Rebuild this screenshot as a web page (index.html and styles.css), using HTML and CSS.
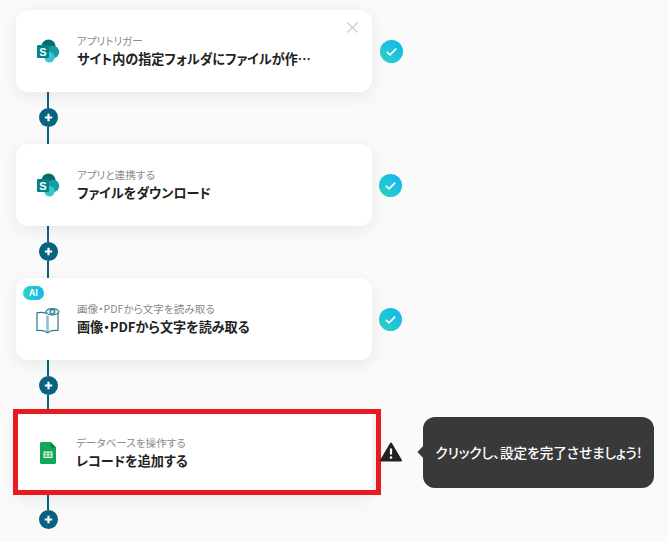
FILE: index.html
```html
<!DOCTYPE html>
<html lang="ja">
<head>
  <meta charset="UTF-8">
  <title>フロー</title>
  <link rel="stylesheet" href="styles.css">
</head>
<body>
  <main class="flow">
    <div class="step">
      <div class="card">
        <svg class="close" width="11" height="11" viewBox="0 0 11 11"><path d="M0.5 0.5L10.5 10.5M10.5 0.5L0.5 10.5" stroke="#cfcfcf" stroke-width="1.4" fill="none"/></svg>
        <svg class="icon" width="24" height="24" viewBox="0 0 24 24">
          <circle cx="12.5" cy="7.5" r="7" fill="#036c70"/>
          <circle cx="17" cy="13" r="6.2" fill="#1a9ba1"/>
          <circle cx="13.5" cy="18.3" r="5.2" fill="#37c6d0"/>
          <rect x="1" y="6" width="12" height="13" rx="1" fill="#038387"/>
          <text class="icon-letter" x="7" y="16.5" text-anchor="middle">S</text>
        </svg>
        <div class="card-text">
          <p class="card-label">アプリトリガー</p>
          <p class="card-title">サイト内の指定フォルダにファイルが作…</p>
        </div>
      </div>
      <svg class="check check-first" width="23" height="23" viewBox="0 0 23 23">
        <defs><linearGradient id="checkA" x1="0" y1="1" x2="1" y2="0"><stop offset="0" stop-color="#2dd4bf"/><stop offset="1" stop-color="#0fb5f2"/></linearGradient></defs>
        <circle cx="11.5" cy="11.5" r="11.5" fill="url(#checkA)"/>
        <path d="M6.8 11.8L10 14.8L16.2 8.6" stroke="#fff" stroke-width="1.6" fill="none"/>
      </svg>
    </div>

    <div class="connector">
      <span class="line"></span>
      <svg class="plus" width="19" height="19" viewBox="0 0 19 19"><circle cx="9.5" cy="9.5" r="9.5" fill="#07637f"/><path d="M9.5 5.8V13.2M5.8 9.5H13.2" stroke="#fff" stroke-width="2.2"/></svg>
      <span class="line line-end"></span>
    </div>

    <div class="step">
      <div class="card">
        <svg class="icon" width="24" height="24" viewBox="0 0 24 24">
          <circle cx="12.5" cy="7.5" r="7" fill="#036c70"/>
          <circle cx="17" cy="13" r="6.2" fill="#1a9ba1"/>
          <circle cx="13.5" cy="18.3" r="5.2" fill="#37c6d0"/>
          <rect x="1" y="6" width="12" height="13" rx="1" fill="#038387"/>
          <text class="icon-letter" x="7" y="16.5" text-anchor="middle">S</text>
        </svg>
        <div class="card-text">
          <p class="card-label">アプリと連携する</p>
          <p class="card-title">ファイルをダウンロード</p>
        </div>
      </div>
      <svg class="check" width="23" height="23" viewBox="0 0 23 23">
        <circle cx="11.5" cy="11.5" r="11.5" fill="url(#checkA)"/>
        <path d="M6.8 11.8L10 14.8L16.2 8.6" stroke="#fff" stroke-width="1.6" fill="none"/>
      </svg>
    </div>

    <div class="connector">
      <span class="line"></span>
      <svg class="plus" width="19" height="19" viewBox="0 0 19 19"><circle cx="9.5" cy="9.5" r="9.5" fill="#07637f"/><path d="M9.5 5.8V13.2M5.8 9.5H13.2" stroke="#fff" stroke-width="2.2"/></svg>
      <span class="line line-end"></span>
    </div>

    <div class="step">
      <div class="card">
        <span class="ai-badge">AI</span>
        <svg class="icon icon-book" width="24" height="27" viewBox="0 0 24 27">
          <path d="M10.5 6.5C8 5.5 4 5.2 1 5.8V23.5C5 23 9 23.5 11.5 25.8C14 23.5 18 23 22 23.5V6" stroke="#2b7a92" stroke-width="1.2" fill="none"/>
          <path d="M11.5 8.5V25" stroke="#8fc0d0" stroke-width="2.6" fill="none"/>
          <path d="M9.8 4.8C12 0.6 20.5 0.6 23 4.8C20.5 9 12 9 9.8 4.8Z" stroke="#2b7a92" stroke-width="1.2" fill="#fff"/>
          <circle cx="16.4" cy="4.8" r="2.4" stroke="#2b7a92" stroke-width="1.2" fill="#cfe4ec"/>
        </svg>
        <div class="card-text">
          <p class="card-label">画像・PDFから文字を読み取る</p>
          <p class="card-title">画像・PDFから文字を読み取る</p>
        </div>
      </div>
      <svg class="check" width="23" height="23" viewBox="0 0 23 23">
        <circle cx="11.5" cy="11.5" r="11.5" fill="url(#checkA)"/>
        <path d="M6.8 11.8L10 14.8L16.2 8.6" stroke="#fff" stroke-width="1.6" fill="none"/>
      </svg>
    </div>

    <div class="connector">
      <span class="line"></span>
      <svg class="plus" width="19" height="19" viewBox="0 0 19 19"><circle cx="9.5" cy="9.5" r="9.5" fill="#07637f"/><path d="M9.5 5.8V13.2M5.8 9.5H13.2" stroke="#fff" stroke-width="2.2"/></svg>
      <span class="line line-end"></span>
    </div>

    <div class="step">
      <div class="card card-todo">
        <span class="highlight"></span>
        <svg class="icon icon-sheets" width="16" height="22" viewBox="0 0 16 22">
          <path d="M1.5 0H10.5L16 5.5V20.5A1.5 1.5 0 0 1 14.5 22H1.5A1.5 1.5 0 0 1 0 20.5V1.5A1.5 1.5 0 0 1 1.5 0Z" fill="#0fa958"/>
          <path d="M10.5 0L16 5.5H11.5A1 1 0 0 1 10.5 4.5Z" fill="#0b8043"/>
          <path d="M3.5 9.5H12.5V16H3.5ZM4.7 10.7V12.2H7.4V10.7ZM8.6 10.7V12.2H11.3V10.7ZM4.7 13.3V14.8H7.4V13.3ZM8.6 13.3V14.8H11.3V13.3Z" fill="#e8f5ee" fill-rule="evenodd"/>
        </svg>
        <div class="card-text">
          <p class="card-label">データベースを操作する</p>
          <p class="card-title">レコードを追加する</p>
        </div>
      </div>
      <svg class="warn" width="22" height="20" viewBox="0 0 22 20">
        <path d="M11 1.5L21 18.5H1Z" fill="#222" stroke="#222" stroke-width="2" stroke-linejoin="round"/>
        <path d="M11 6.5V12.5" stroke="#fff" stroke-width="2.2"/>
        <circle cx="11" cy="15.5" r="1.3" fill="#fff"/>
      </svg>
      <div class="tooltip">クリックし、設定を完了させましょう!</div>
    </div>

    <div class="connector">
      <span class="line"></span>
      <svg class="plus" width="19" height="19" viewBox="0 0 19 19"><circle cx="9.5" cy="9.5" r="9.5" fill="#07637f"/><path d="M9.5 5.8V13.2M5.8 9.5H13.2" stroke="#fff" stroke-width="2.2"/></svg>
    </div>
  </main>
</body>
</html>
```

FILE: styles.css
```css
html, body {
  margin: 0;
  height: 100%;
  overflow: hidden;
}
body {
  background: #fafafa;
  font-family: "Noto Sans CJK JP", "Noto Sans", sans-serif;
  font-feature-settings: "palt";
  color: #222;
}
.flow {
  padding: 10px 0 0 16px;
}
.step {
  display: flex;
  align-items: center;
}
.card {
  position: relative;
  display: flex;
  align-items: center;
  box-sizing: border-box;
  width: 356px;
  height: 82px;
  padding-left: 20px;
  background: #fff;
  border-radius: 12px;
  box-shadow: 0 4px 18px rgba(0, 0, 0, 0.08);
}
.card-todo {
  border-radius: 0;
}
.icon {
  flex: none;
  margin-right: 17px;
}
.icon-book {
  margin-top: 3px;
}
.icon-sheets {
  margin-left: 4px;
  margin-right: 20px;
}
.icon-letter {
  font-family: "Liberation Sans", sans-serif;
  font-size: 11px;
  font-weight: 700;
  fill: #fff;
}
.card-text {
  min-width: 0;
}
.card-label {
  margin: 0;
  font-size: 10.6px;
  line-height: 14px;
  color: #8a8a8a;
}
.card-title {
  margin: 1px 0 0;
  font-size: 13.1px;
  line-height: 19px;
  font-weight: 700;
  color: #222;
  white-space: nowrap;
}
.close {
  position: absolute;
  top: 12px;
  right: 14px;
}
.ai-badge {
  position: absolute;
  top: 8px;
  left: 7px;
  width: 21px;
  height: 14px;
  border-radius: 7px;
  background: linear-gradient(90deg, #2dd4bf, #0fb5f2);
  color: #fff;
  font-size: 9px;
  font-weight: 700;
  line-height: 14px;
  text-align: center;
}
.highlight {
  position: absolute;
  top: -3px;
  left: -3px;
  right: -9px;
  bottom: -1px;
  border: 5px solid #e8191f;
  box-sizing: border-box;
}
.check {
  flex: none;
  margin-left: 7px;
}
.check-first {
  margin-left: 8px;
}
.warn {
  position: relative;
  flex: none;
  margin: -3px 0 0 8px;
}
.tooltip {
  position: relative;
  flex: none;
  box-sizing: border-box;
  width: 231px;
  height: 71px;
  margin: -1px 0 0 21px;
  border-radius: 12px;
  background: #393939;
  color: #fff;
  font-size: 13.6px;
  font-weight: 500;
  line-height: 71px;
  text-align: center;
}
.tooltip::before {
  content: "";
  position: absolute;
  top: 31px;
  left: -4px;
  width: 8px;
  height: 8px;
  background: #393939;
  transform: rotate(45deg);
}
.connector {
  display: flex;
  flex-direction: column;
  width: 19px;
  height: 52px;
  margin-left: 23px;
}
.line {
  display: block;
  width: 2px;
  height: 16px;
  margin-left: 8px;
  background: #07637f;
}
.line-end {
  height: 17px;
}
.plus {
  display: block;
  flex: none;
}
```
